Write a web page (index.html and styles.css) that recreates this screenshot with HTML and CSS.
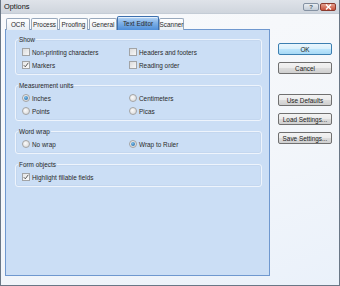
FILE: index.html
```html
<!DOCTYPE html>
<html lang="en">
<head>
    <meta charset="UTF-8">
    <title>Options</title>
    <link rel="stylesheet" href="styles.css">
</head>
<body>
    <div class="window">
        <!-- Title bar -->
        <div class="titlebar">
            <span class="title">Options</span>
            <div class="caption-buttons">
                <span class="cap-btn help">?</span>
                <span class="cap-btn close">
                    <svg width="7" height="6" viewBox="0 0 7 6"><path d="M1 0.5 L6 5.5 M6 0.5 L1 5.5" stroke="#fff" stroke-width="1.4"/></svg>
                </span>
            </div>
        </div>

        <div class="client">
            <!-- Tabs and page -->
            <div class="tab-area">
                <div class="tabs">
                    <div class="tab">OCR</div>
                    <div class="tab">Process</div>
                    <div class="tab">Proofing</div>
                    <div class="tab">General</div>
                    <div class="tab selected">Text Editor</div>
                    <div class="tab">Scanner</div>
                </div>

                <div class="panel">
                    <fieldset class="group">
                        <legend>Show</legend>
                        <div class="options">
                            <label class="opt"><span class="check"></span>Non-printing characters</label>
                            <label class="opt"><span class="check"></span>Headers and footers</label>
                            <label class="opt"><span class="check checked"><svg width="6" height="6" viewBox="0 0 6 6"><path d="M0.8 3.2 L2.3 4.8 L5.3 0.8" fill="none" stroke="#4a4a4a" stroke-width="0.9"/></svg></span>Markers</label>
                            <label class="opt"><span class="check"></span>Reading order</label>
                        </div>
                    </fieldset>

                    <fieldset class="group">
                        <legend>Measurement units</legend>
                        <div class="options">
                            <label class="opt"><span class="radio on"></span>Inches</label>
                            <label class="opt"><span class="radio"></span>Centimeters</label>
                            <label class="opt"><span class="radio"></span>Points</label>
                            <label class="opt"><span class="radio"></span>Picas</label>
                        </div>
                    </fieldset>

                    <fieldset class="group">
                        <legend>Word wrap</legend>
                        <div class="options">
                            <label class="opt"><span class="radio"></span>No wrap</label>
                            <label class="opt"><span class="radio on"></span>Wrap to Ruler</label>
                        </div>
                    </fieldset>

                    <fieldset class="group">
                        <legend>Form objects</legend>
                        <div class="options">
                            <label class="opt"><span class="check checked"><svg width="6" height="6" viewBox="0 0 6 6"><path d="M0.8 3.2 L2.3 4.8 L5.3 0.8" fill="none" stroke="#4a4a4a" stroke-width="0.9"/></svg></span>Highlight fillable fields</label>
                        </div>
                    </fieldset>
                </div>
            </div>

            <!-- Dialog buttons on the right -->
            <div class="side-buttons">
                <button class="btn default">OK</button>
                <button class="btn">Cancel</button>
                <button class="btn spaced">Use Defaults</button>
                <button class="btn">Load Settings...</button>
                <button class="btn">Save Settings...</button>
            </div>
        </div>
    </div>
</body>
</html>
```

FILE: styles.css
```css
body {
    margin: 0;
    padding: 0;
    font-family: "Liberation Sans", Arial, sans-serif;
    color: #2a2a2a;
}

/* Outer dialog window */
.window {
    width: 340px;
    height: 286px;
    box-sizing: border-box;
    border: 1px solid #6a7786;
    border-top: none;
    background: linear-gradient(160deg, #f9fafc 0%, #f3f6fa 60%, #eaf1fa 100%);
    display: flex;
    flex-direction: column;
}

/* Title bar */
.titlebar {
    height: 14px;
    flex-shrink: 0;
    display: flex;
    align-items: center;
    justify-content: space-between;
    padding-left: 3px;
    background: linear-gradient(#dfe3e9, #cfd5dd);
    border-bottom: 1px solid #c4ccd6;
    box-sizing: border-box;
}

.title {
    font-size: 7.4px;
    color: #111;
}

.caption-buttons {
    display: flex;
    gap: 1px;
    margin-right: 3px;
}

.cap-btn {
    width: 16px;
    height: 8px;
    box-sizing: border-box;
    border-radius: 2px;
    display: flex;
    align-items: center;
    justify-content: center;
    font-size: 6px;
    font-weight: bold;
}

.cap-btn.help {
    background: linear-gradient(#e9edf2, #c3ccd7);
    border: 1px solid #8592a3;
    color: #4b5868;
}

.cap-btn.close {
    background: linear-gradient(#e4a08f, #c8503a);
    border: 1px solid #8a3a2e;
}

/* Client area: tabs on left, buttons on right */
.client {
    flex: 1;
    display: flex;
    padding: 2px 0 9px 4px;
}

.tab-area {
    width: 265px;
    display: flex;
    flex-direction: column;
}

.tabs {
    display: grid;
    grid-template-columns: 24px 27px 29px 28px 40px 25px;
    column-gap: 1px;
    align-items: end;
    height: 14px;
    margin-left: 1px;
    margin-bottom: -1px;
    position: relative;
    z-index: 1;
}

.tab {
    height: 12px;
    box-sizing: border-box;
    border: 1px solid #98a8bc;
    border-bottom: none;
    border-radius: 2px 2px 0 0;
    background: linear-gradient(#ffffff, #e9eef4);
    font-size: 6.4px;
    display: flex;
    align-items: center;
    justify-content: center;
    white-space: nowrap;
}

.tab.selected {
    height: 14px;
    margin: 0 -1px;
    border-color: #3c6fae;
    background: linear-gradient(#b9d7f6, #7fb0e6 45%, #4f8fd9);
    box-shadow: inset 0 1px 0 #e2effc;
}

/* Tab page */
.panel {
    flex: 1;
    background-color: #cbdef5;
    border: 1px solid #6f98cf;
    padding: 6px 7px 0 9px;
    display: flex;
    flex-direction: column;
    gap: 7px;
}

/* Group boxes */
.group {
    margin: 0;
    min-width: 0;
    padding: 2.5px 4px 2.5px 6px;
    border: 1px solid #eef4fc;
    border-radius: 3px;
    box-shadow: 0 0 0 1px #c4d7ef inset;
}

.group legend {
    font-size: 6.4px;
    line-height: 7px;
    padding: 0 1px;
    margin-left: -4px;
}

.options {
    display: grid;
    grid-template-columns: 107px 1fr;
    grid-auto-rows: 13px;
}

.opt {
    display: flex;
    align-items: center;
    font-size: 6.4px;
    white-space: nowrap;
}

/* Checkbox */
.check {
    width: 8px;
    height: 8px;
    box-sizing: border-box;
    border: 1px solid #a2a4a6;
    background: linear-gradient(135deg, #dcdcdc, #f7f7f7);
    margin-right: 2px;
    display: flex;
    align-items: center;
    justify-content: center;
}

.check.checked {
    background: linear-gradient(135deg, #e6e6e6, #fbfbfb);
}

/* Radio button */
.radio {
    width: 8px;
    height: 8px;
    box-sizing: border-box;
    border-radius: 50%;
    border: 1px solid #a4a4a4;
    background: radial-gradient(circle at 40% 40%, #fafafa, #d4d4d4);
    margin-right: 2px;
    display: flex;
    align-items: center;
    justify-content: center;
}

.radio.on::after {
    content: "";
    width: 4px;
    height: 4px;
    border-radius: 50%;
    background: radial-gradient(circle at 40% 35%, #7fc1ec, #165d9e);
}

/* Right-hand buttons */
.side-buttons {
    display: flex;
    flex-direction: column;
    gap: 7px;
    margin-left: 8px;
    margin-top: 27px;
}

.btn {
    width: 54px;
    height: 12px;
    padding: 0;
    border: 1px solid #707070;
    border-radius: 2px;
    background: linear-gradient(#f3f3f3 0%, #ebebeb 50%, #dddddd 50%, #cfcfcf 100%);
    font-family: "Liberation Sans", Arial, sans-serif;
    font-size: 6.4px;
    color: #222;
}

.btn.default {
    border-color: #3c7fb1;
    background: linear-gradient(#eaf6fd 0%, #d9f0fc 50%, #bee6fd 50%, #a7d9f5 100%);
}

.btn.spaced {
    margin-top: 13px;
}
```
